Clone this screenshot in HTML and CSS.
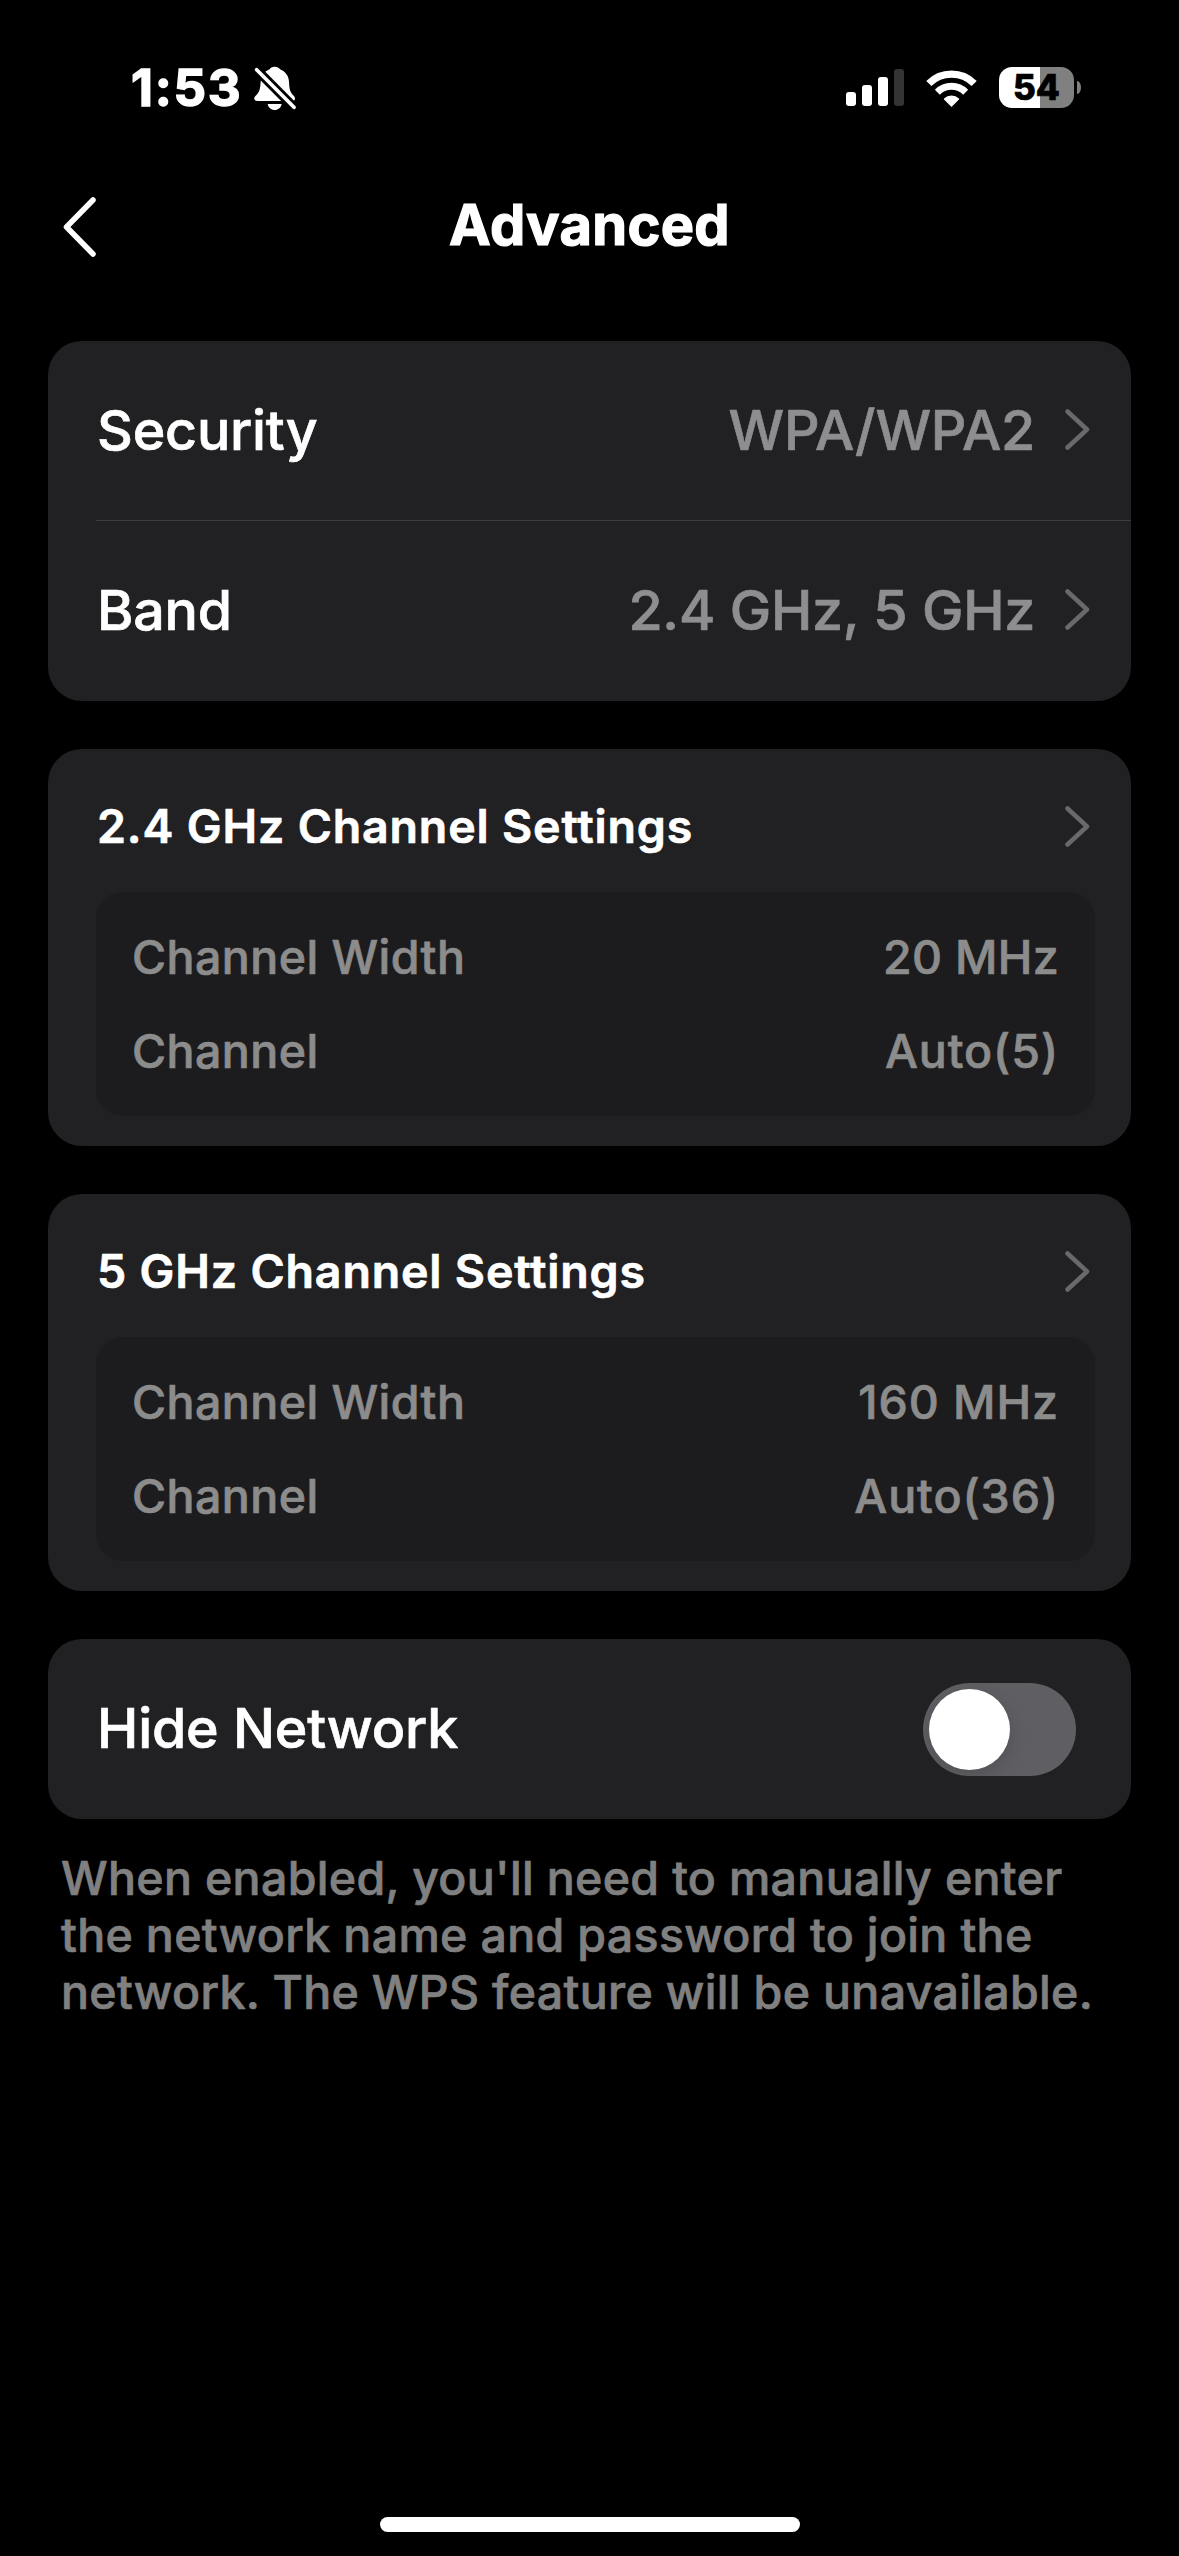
FILE: index.html
```
<!DOCTYPE html>
<html lang="en">
  <head>
    <meta charset="UTF-8" />
    <meta name="viewport" content="width=device-width, initial-scale=1.0" />
    <title>Advanced</title>
    <link rel="stylesheet" href="styles.css">
  </head>
  <body>
    <div class="screen">
      <div class="status-bar">
        <div class="status-left">
          <span class="time">1:53</span>
          <svg class="bell" viewBox="0 0 126 132">
            <path fill="#fff" d="M62 2C54 2 49 5 47 10C30 17 21 30 20 47C19 66 17 76 8 86C2 92 0 95 1 99C2 103 5 105 10 105H114C119 105 123 103 123 98C123 94 121 91 117 87C107 76 106 66 105 47C104 30 95 17 78 10C75 5 70 2 62 2Z" />
            <path fill="#fff" d="M41 114H83C81 125 73 132 62 132C51 132 43 125 41 114Z" />
            <path stroke="#000" stroke-width="28" d="M0 3L126 130" />
            <path stroke="#fff" stroke-width="11" stroke-linecap="round" d="M8 11L120 124" />
          </svg>
        </div>
        <div class="status-right">
          <div class="signal">
            <i class="bar bar-1"></i>
            <i class="bar bar-2"></i>
            <i class="bar bar-3"></i>
            <i class="bar bar-4"></i>
          </div>
          <svg class="wifi" viewBox="0 0 153 114">
            <g fill="none" stroke="#fff">
              <path stroke-width="22" d="M8.5 43.5A96.5 96.5 0 0 1 144.5 43.5" />
              <path stroke-width="21" d="M34 69.5A60 60 0 0 1 119 69.5" />
            </g>
            <path fill="#fff" stroke="#fff" stroke-width="4" stroke-linejoin="round" d="M76.5 111L55.5 90A30 30 0 0 1 97.5 90Z" />
          </svg>
          <div class="battery">
            <div class="battery-body">54</div>
            <div class="battery-cap"></div>
          </div>
        </div>
      </div>

      <div class="nav">
        <svg class="back" viewBox="0 0 33 60">
          <path d="M30 3L3.5 30L30 57" />
        </svg>
        <h1>Advanced</h1>
      </div>

      <div class="content">
        <div class="card">
          <div class="row">
            <span class="label">Security</span>
            <span class="value">WPA/WPA2</span>
            <svg class="chevron" viewBox="0 0 25 41"><path d="M2.5 2.5L22 20.5L2.5 38.5" /></svg>
          </div>
          <div class="divider"></div>
          <div class="row">
            <span class="label">Band</span>
            <span class="value">2.4 GHz, 5 GHz</span>
            <svg class="chevron" viewBox="0 0 25 41"><path d="M2.5 2.5L22 20.5L2.5 38.5" /></svg>
          </div>
        </div>

        <div class="card channel-card">
          <div class="card-header">
            <h2>2.4 GHz Channel Settings</h2>
            <svg class="chevron" viewBox="0 0 25 41"><path d="M2.5 2.5L22 20.5L2.5 38.5" /></svg>
          </div>
          <div class="details">
            <div class="detail"><span>Channel Width</span><span class="mhz">20 MHz</span></div>
            <div class="detail"><span>Channel</span><span class="auto">Auto(5)</span></div>
          </div>
        </div>

        <div class="card channel-card">
          <div class="card-header">
            <h2>5 GHz Channel Settings</h2>
            <svg class="chevron" viewBox="0 0 25 41"><path d="M2.5 2.5L22 20.5L2.5 38.5" /></svg>
          </div>
          <div class="details">
            <div class="detail"><span>Channel Width</span><span class="auto">160 MHz</span></div>
            <div class="detail"><span>Channel</span><span class="auto">Auto(36)</span></div>
          </div>
        </div>

        <div class="card">
          <div class="row toggle-row">
            <span class="label">Hide Network</span>
            <div class="toggle"><div class="knob"></div></div>
          </div>
        </div>

        <p class="note">When enabled, you'll need to manually enter<br>the network name and password to join the<br>network. The WPS feature will be unavailable.</p>
      </div>

      <div class="home-indicator"></div>
    </div>
  </body>
</html>
```

FILE: styles.css
```
* {
  box-sizing: border-box;
}
body {
  margin: 0;
  background-color: #000;
  color: #fff;
  font-family: Inter, "Liberation Sans", sans-serif;
  -webkit-text-stroke: 0.7px currentColor;
}
svg {
  display: block;
  flex: none;
}
.screen {
  width: 1179px;
  height: 2556px;
  display: flex;
  flex-direction: column;
  overflow: hidden;
}

/* status bar */
.status-bar {
  height: 175px;
  display: flex;
  justify-content: space-between;
  padding: 0 98px 0 131px;
}
.status-left,
.status-right {
  height: 175px;
  display: flex;
  align-items: center;
}
.time {
  width: 123px;
  font-size: 51px;
  font-weight: 700;
  letter-spacing: 1.7px;
  -webkit-text-stroke: 1.4px currentColor;
}
.bell {
  width: 42px;
  height: 44px;
}
.signal {
  height: 37px;
  display: flex;
  align-items: flex-end;
  gap: 6px;
}
.bar {
  width: 10px;
  border-radius: 3px;
  background-color: #fff;
}
.bar-1 {
  height: 14px;
}
.bar-2 {
  height: 21px;
}
.bar-3 {
  height: 29px;
}
.bar-4 {
  height: 37px;
  background-color: #333;
}
.wifi {
  width: 51px;
  height: 38px;
  margin: 0 22px;
}
.battery {
  display: flex;
  align-items: center;
  gap: 3px;
}
.battery-body {
  width: 75px;
  height: 41px;
  border-radius: 13px;
  background: linear-gradient(to right, #fff 41px, #808080 41px);
  color: #000;
  font-size: 35px;
  font-weight: 800;
  line-height: 41px;
  text-align: center;
}
.battery-cap {
  width: 4px;
  height: 13px;
  border-radius: 0 4px 4px 0 / 0 7px 7px 0;
  background-color: #808080;
}

/* title bar */
.nav {
  height: 104px;
  display: grid;
  grid-template-columns: 33px 1fr 33px;
  align-items: center;
  padding: 0 63px;
}
.back {
  width: 33px;
  height: 60px;
}
.back path {
  fill: none;
  stroke: #fff;
  stroke-width: 5.5;
  stroke-linecap: round;
  stroke-linejoin: round;
}
h1 {
  margin: 0 0 4px;
  font-size: 56px;
  font-weight: 700;
  line-height: 68px;
  letter-spacing: 0.3px;
  text-align: center;
  -webkit-text-stroke: 1.2px currentColor;
}

/* cards */
.content {
  flex: 1;
  display: flex;
  flex-direction: column;
  gap: 48px;
  padding: 62px 48px 0;
}
.card {
  border-radius: 34px;
  background-color: #212123;
}
.row {
  height: 179px;
  display: flex;
  align-items: center;
  padding: 0 41px 2px 49px;
  font-size: 55.5px;
  font-weight: 500;
  letter-spacing: -0.2px;
}
.row:last-child {
  height: 180px;
  padding-bottom: 4px;
}
.label {
  flex: 1;
}
.value {
  margin-right: 30px;
  color: #8e8e90;
  letter-spacing: -0.25px;
}
.chevron {
  width: 25px;
  height: 41px;
}
.chevron path {
  fill: none;
  stroke: #69696b;
  stroke-width: 4.5;
  stroke-linecap: round;
  stroke-linejoin: round;
}
.divider {
  height: 1px;
  margin-left: 48px;
  background-color: #3d3d3f;
}
.channel-card {
  padding: 0 36px 30px 48px;
}
.card-header {
  height: 143px;
  display: flex;
  align-items: center;
  justify-content: space-between;
  padding: 11px 5px 0 1px;
}
h2 {
  margin: 0;
  font-size: 46.5px;
  font-weight: 600;
  letter-spacing: 0.83px;
}
.details {
  padding: 18px 36px;
  border-radius: 27px;
  background-color: #1c1c1e;
}
.detail {
  height: 94px;
  display: flex;
  align-items: center;
  justify-content: space-between;
  color: #8c8c8c;
  font-size: 46.5px;
  font-weight: 500;
  letter-spacing: 0.45px;
}
.mhz {
  letter-spacing: 0.3px;
}
.auto {
  letter-spacing: 0.95px;
}

/* hide network */
.row.toggle-row {
  padding: 1px 55px 0 49px;
}
.toggle-row .label {
  margin-bottom: 4px;
}
.toggle {
  width: 153px;
  height: 93px;
  padding: 6px;
  border-radius: 47px;
  background-color: #5f5e63;
  overflow: hidden;
}
.knob {
  width: 81px;
  height: 81px;
  border-radius: 50%;
  background-color: #fff;
  box-shadow: 0 6px 18px rgba(0, 0, 0, 0.15);
}
.note {
  margin: -17px 0 0;
  padding: 0 0 0 13px;
  color: #808080;
  font-size: 46.5px;
  font-weight: 500;
  line-height: 57px;
  letter-spacing: 0.33px;
  white-space: nowrap;
}
.home-indicator {
  width: 420px;
  height: 15px;
  margin: 0 auto 24px;
  border-radius: 8px;
  background-color: #fff;
}
```
